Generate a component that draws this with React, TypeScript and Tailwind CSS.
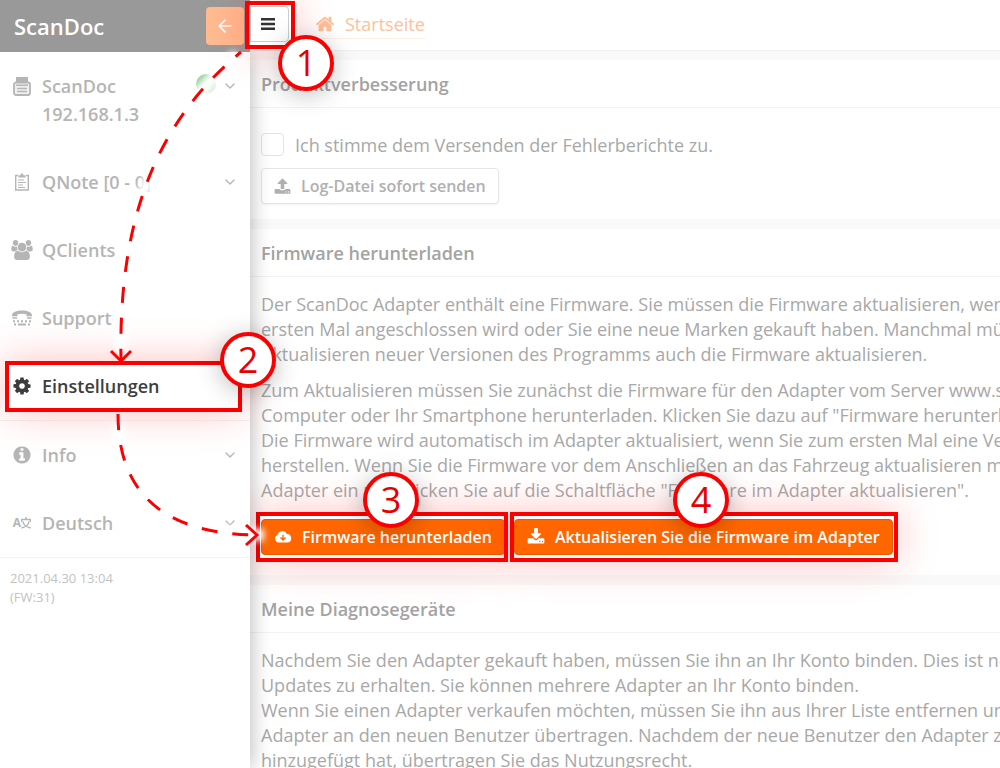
import type { ReactNode } from "react";
import { ArrowLeft, ChevronDown } from "lucide-react";
import { cx } from "class-variance-authority";

const ICONS = {
  download:
    "M1344 1344q0-26-19-45t-45-19-45 19-19 45 19 45 45 19 45-19 19-45zm256 0q0-26-19-45t-45-19-45 19-19 45 19 45 45 19 45-19 19-45zm128-224v320q0 40-28 68t-68 28h-1472q-40 0-68-28t-28-68v-320q0-40 28-68t68-28h465l135 136q58 56 136 56t136-56l136-136h464q40 0 68 28t28 68zm-325-569q17 41-14 70l-448 448q-18 19-45 19t-45-19l-448-448q-31-29-14-70 17-39 59-39h256v-448q0-26 19-45t45-19h256q26 0 45 19t19 45v448h256q42 0 59 39z",
  upload:
    "M1344 1472q0-26-19-45t-45-19-45 19-19 45 19 45 45 19 45-19 19-45zm256 0q0-26-19-45t-45-19-45 19-19 45 19 45 45 19 45-19 19-45zm128-224v320q0 40-28 68t-68 28h-1472q-40 0-68-28t-28-68v-320q0-40 28-68t68-28h427q21 56 70.5 92t110.5 36h256q61 0 110.5-36t70.5-92h427q40 0 68 28t28 68zm-325-648q-17 40-59 40h-256v448q0 26-19 45t-45 19h-256q-26 0-45-19t-19-45v-448h-256q-42 0-59-40-17-39 14-69l448-448q18-19 45-19t45 19l448 448q31 30 14 69z",
  home: "M1472 992v480q0 26-19 45t-45 19h-384v-384h-256v384h-384q-26 0-45-19t-19-45v-480q0-1 .5-3t.5-3l575-474 575 474q1 2 1 6zm223-69l-62 74q-8 9-21 11h-3q-13 0-21-7l-692-577-692 577q-12 8-24 7-13-2-21-11l-62-74q-8-10-7-23.5t11-21.5l719-599q32-26 76-26t76 26l244 204v-195q0-14 9-23t23-9h192q14 0 23 9t9 23v408l219 182q10 8 11 21.5t-7 23.5z",
  info: "M1152 1376v-160q0-14-9-23t-23-9h-96v-512q0-14-9-23t-23-9h-320q-14 0-23 9t-9 23v160q0 14 9 23t23 9h96v320h-96q-14 0-23 9t-9 23v160q0 14 9 23t23 9h448q14 0 23-9t9-23zm-128-896v-160q0-14-9-23t-23-9h-192q-14 0-23 9t-9 23v160q0 14 9 23t23 9h192q14 0 23-9t9-23zm640 416q0 209-103 385.5t-279.5 279.5-385.5 103-385.5-103-279.5-279.5-103-385.5 103-385.5 279.5-279.5 385.5-103 385.5 103 279.5 279.5 103 385.5z",
  cog: "M1152 896q0-106-75-181t-181-75-181 75-75 181 75 181 181 75 181-75 75-181zm512-109v222q0 12-8 23t-20 13l-185 28q-19 54-39 91 35 50 107 138 10 12 10 25t-9 23q-27 37-99 108t-94 71q-12 0-26-9l-138-108q-44 23-91 38-16 136-29 186-7 28-36 28h-222q-14 0-24.5-8.5t-11.5-21.5l-28-184q-49-16-90-37l-141 107q-10 9-25 9-14 0-25-11-126-114-165-168-7-10-7-23 0-12 8-23 15-21 51-66.5t54-70.5q-27-50-41-99l-183-27q-13-2-21-12.5t-8-23.5v-222q0-12 8-23t19-13l186-28q14-46 39-92-40-57-107-138-10-12-10-24 0-10 9-23 26-36 98.5-107.5t94.5-71.5q13 0 26 10l138 107q44-23 91-38 16-136 29-186 7-28 36-28h222q14 0 24.5 8.5t11.5 21.5l28 184q49 16 90 37l142-107q9-9 24-9 13 0 25 10 129 119 165 170 7 8 7 22 0 12-8 23-15 21-51 66.5t-54 70.5q26 50 41 98l183 28q13 2 21 12.5t8 23.5z",
  users:
    "M593 896q-162 5-265 128h-134q-82 0-138-40.5t-56-118.5q0-353 124-353 6 0 43.5 21t97.5 42.5 119 21.5q67 0 133-23-5 37-5 66 0 139 81 256zm1071 637q0 120-73 189.5t-194 69.5h-874q-121 0-194-69.5t-73-189.5q0-53 3.5-103.5t14-109 26.5-108.5 43-97.5 62-81 85.5-53.5 111.5-20q10 0 43 21.5t73 48 107 48 135 21.5 135-21.5 107-48 73-48 43-21.5q61 0 111.5 20t85.5 53.5 62 81 43 97.5 26.5 108.5 14 109 3.5 103.5zm-1024-1277q0 106-75 181t-181 75-181-75-75-181 75-181 181-75 181 75 75 181zm704 384q0 159-112.5 271.5t-271.5 112.5-271.5-112.5-112.5-271.5 112.5-271.5 271.5-112.5 271.5 112.5 112.5 271.5zm576 225q0 78-56 118.5t-138 40.5h-134q-103-123-265-128 81-117 81-256 0-29-5-66 66 23 133 23 59 0 119-21.5t97.5-42.5 43.5-21q124 0 124 353zm-128-609q0 106-75 181t-181 75-181-75-75-181 75-181 181-75 181 75 75 181z",
};

const Icon = ({ name, className }: { name: keyof typeof ICONS; className: string }) => (
  <svg
    viewBox={name === "users" ? "0 0 1920 1792" : "0 0 1792 1792"}
    className={cx("shrink-0 fill-current", className)}
    aria-hidden="true"
  >
    <path d={ICONS[name]} />
  </svg>
);

const DeviceIcon = () => (
  <svg viewBox="0 0 18 20" className="h-5 w-[18px]" fill="none" aria-hidden="true">
    <path d="M3 1h12v5H3z" fill="currentColor" />
    <rect x="1" y="6.500" width="16" height="12.500" rx="2" fill="#f0f0f0" stroke="currentColor" strokeWidth="1.800" />
    <path d="M3 9.200h12M4 12.400h10M4 15.600h10" stroke="currentColor" strokeWidth="1.500" />
  </svg>
);

const NoteIcon = () => (
  <svg viewBox="0 0 16 18" className="h-[18px] w-4" fill="none" stroke="currentColor" aria-hidden="true">
    <path d="M4 2.500H1.700v14.500h12.600V2.500H12" strokeWidth="1.400" />
    <path d="M4.500 4.500V2.300h2L7 .5h2l.5 1.800h2v2.200z" fill="currentColor" stroke="none" />
    <path d="M4 7h6M4 9.500h8M4 12h5M4 14.500h7" strokeWidth="1.200" />
  </svg>
);

const PhoneIcon = () => (
  <svg viewBox="0 0 20 16" className="h-4 w-5" fill="currentColor" aria-hidden="true">
    <path d="M0 5.500C0 2 4.500.500 10 .500S20 2 20 5.500v.700h-5.500V4.300C12 3.500 8 3.500 5.500 4.300v1.900H0z" />
    <path d="M.5 7.300H5v1.500H.5zM15 7.300h4.500v1.500H15z" />
    <path d="M1 10.300h2v2H1zM5 10.300h2v2H5zM9 10.300h2v2H9zM13 10.300h2v2h-2zM17 10.300h2v2h-2zM2 13.500h2v2H2zM6 13.500h8v2H6zM16 13.500h2v2h-2z" />
  </svg>
);

const LanguageIcon = () => (
  <span className="flex items-center text-xs font-bold" aria-hidden="true">
    A
    <svg viewBox="0 0 10 12" className="h-3 w-2.5" fill="none" stroke="currentColor" strokeWidth="1.500">
      <path d="M5 0v2.500M.5 5V2.500h9V5M2 4.500c.5 3 3 5.500 7.500 6.500M8 4.500C7.500 7.500 5 10 .5 11" />
    </svg>
  </span>
);

const CloudIcon = () => (
  <svg viewBox="0 0 18 14" className="h-3.5 w-[18px] shrink-0" aria-hidden="true">
    <path
      d="M4.500 12.500A4 4 0 0 1 3.300 5 5.200 5.200 0 0 1 13 4a4.300 4.300 0 0 1 .8 8.500z"
      fill="currentColor"
    />
    <path d="M9 4.800v5M6.500 7.500 9 10l2.500-2.500" fill="none" stroke="#ff6600" strokeWidth="1.400" />
  </svg>
);

const Frame = ({ className }: { className: string }) => (
  <span
    className={cx(
      "pointer-events-none absolute border-4 border-[#fa0000] shadow-[0_0_40px_rgba(255,0,0,0.25)]",
      className
    )}
  />
);

const Step = ({ value, className }: { value: number; className: string }) => (
  <span
    className={cx(
      "pointer-events-none absolute flex size-14 items-center justify-center rounded-full border-4 border-[#fa0000] bg-white text-4xl font-medium text-[#e60000] shadow-[0_4px_24px_rgba(0,0,0,0.25)]",
      className
    )}
  >
    {value}
  </span>
);

type RowProps = {
  icon: ReactNode;
  label: ReactNode;
  expandable?: boolean;
  active?: boolean;
  status?: boolean;
};

const MenuRow = ({ icon, label, expandable, active, status }: RowProps) => (
  <li className={cx("relative", active && "z-10")}>
    <a
      href="#"
      className={cx(
        "flex items-start gap-2 py-5 pr-3 pl-2.5 text-lg leading-7 font-semibold",
        active ? "text-[#3d3d3d]" : "text-[#b5b5b5]"
      )}
    >
      <span className="flex h-7 w-6 shrink-0 items-center justify-center">{icon}</span>
      <span className="flex-1">{label}</span>
      {status && (
        <span className="mt-0.5 -mr-0.5 size-5 rounded-full bg-linear-to-br from-[#96cf99] from-40% to-[#d6efd6] to-60%" />
      )}
      {expandable && <ChevronDown className="mt-1.5 size-4" />}
    </a>
    {active && (
      <>
        <Frame className="top-[9px] right-2 bottom-2 left-[5px]" />
        <Step value={2} className="-top-5 left-[220px]" />
      </>
    )}
  </li>
);

const Card = ({ title, children }: { title: string; children: ReactNode }) => (
  <section className="bg-white">
    <h2 className="flex h-12 items-center border-b border-[#f3f3f3] px-[11px] text-lg font-semibold text-[#a3a3a3]">
      {title}
    </h2>
    {children}
  </section>
);

const Arrows = () => (
  <svg
    width="270"
    height="560"
    className="pointer-events-none absolute top-0 left-0 z-30 overflow-visible"
    fill="none"
    aria-hidden="true"
  >
    <defs>
      <filter id="halo" filterUnits="userSpaceOnUse" x="-20" y="0" width="320" height="600">
        <feGaussianBlur stdDeviation="3" />
      </filter>
    </defs>
    <g stroke="#fff" strokeWidth="12" filter="url(#halo)">
      <path d="M237 55C165 115 120 205 121 350" />
      <path d="M118 424C118 490 160 534 264 535" />
    </g>
    <g stroke="#fa0000" strokeWidth="3">
      <path d="M241 52C165 115 118 205 121 360" strokeDasharray="16 15" strokeDashoffset="9" />
      <path d="M111 351l10 10 10-10" />
      <path d="M118 414C118 490 160 534 257 535" strokeDasharray="16 15" />
      <path d="M246 525l11 10-11 10" />
    </g>
  </svg>
);

const App = () => {
  return (
    <div className="relative flex h-screen overflow-hidden bg-white font-['Open_Sans',sans-serif]">
      <aside className="relative z-10 flex w-[250px] shrink-0 flex-col">
        <div className="z-10 flex h-[52px] items-center justify-between bg-[#999] pr-1.5 pl-3.5">
          <span className="text-[22px] font-semibold text-white">ScanDoc</span>
          <button
            type="button"
            aria-label="Zurück"
            className="flex size-[38px] items-center justify-center rounded bg-[#ffbb91] text-white"
          >
            <ArrowLeft className="size-5" />
          </button>
        </div>
        <div className="flex-1 bg-white shadow-[0_0_20px_rgba(0,0,0,0.3)]">
          <ul className="border-b border-[#f3f3f3]">
            <MenuRow
              icon={<DeviceIcon />}
              label={
                <>
                  ScanDoc
                  <br />
                  192.168.1.3
                </>
              }
              expandable
              status
            />
            <MenuRow icon={<NoteIcon />} label="QNote [0 - 0]" expandable />
            <MenuRow icon={<Icon name="users" className="h-5 w-[22px]" />} label="QClients" />
            <MenuRow icon={<PhoneIcon />} label="Support" />
            <MenuRow icon={<Icon name="cog" className="size-5" />} label="Einstellungen" active />
          </ul>
          <ul className="border-b border-[#f3f3f3]">
            <MenuRow icon={<Icon name="info" className="size-5" />} label="Info" expandable />
            <MenuRow icon={<LanguageIcon />} label="Deutsch" expandable />
          </ul>
          <p className="px-2.5 py-[11px] text-[13px] leading-[19px] text-[#c2c2c2]">
            2021.04.30 13:04
            <br />
            (FW:31)
          </p>
        </div>
      </aside>

      <div className="flex min-w-0 flex-1 flex-col bg-[#f9f9f9]">
        <header className="relative z-20 flex h-[51px] shrink-0 items-center border-b border-[#f0f0f0] bg-white pb-0.5">
          <button
            type="button"
            aria-label="Menü"
            className="flex h-9 w-[39px] items-center justify-center rounded-r border border-[#ccc] pr-1 text-[#333]"
          >
            <svg viewBox="0 0 16 14" className="h-3.5 w-4 fill-current" aria-hidden="true">
              <path d="M1 1h14v2.500H1zM1 5.700h14v2.500H1zM1 10.400h14v2.500H1z" />
            </svg>
          </button>
          <a href="#" className="ml-[26px] flex items-center gap-2.5 border-b border-[#fff0e6] text-lg text-[#ffbf99]">
            <Icon name="home" className="size-5" />
            Startseite
          </a>
          <Frame className="top-px -left-[5px] h-12 w-[50px]" />
          <Step value={1} className="top-[35px] left-7" />
        </header>

        <main className="flex flex-col gap-2.5 pt-[9px] whitespace-nowrap text-[#a8a8a8]">
          <Card title="Produktverbesserung">
            <div className="flex flex-col items-start gap-3 px-[11px] pt-[25px] pb-[15px]">
              <label className="flex h-[23px] items-center gap-[11px] text-lg">
                <input
                  type="checkbox"
                  className="size-[23px] appearance-none rounded border border-[#e3e3e3] bg-white checked:bg-[#ff6600]"
                />
                Ich stimme dem Versenden der Fehlerberichte zu.
              </label>
              <button
                type="button"
                className="flex h-9 items-center gap-2.5 rounded border border-[#e6e6e6] bg-white px-3 text-base font-semibold text-[#b0b0b0] shadow-sm shadow-black/5"
              >
                <Icon name="upload" className="size-[17px]" />
                Log-Datei sofort senden
              </button>
            </div>
          </Card>

          <Card title="Firmware herunterladen">
            <div className="px-[11px] pt-[15px] pb-5 text-lg leading-[25px]">
              <p>
                Der ScanDoc Adapter enthält eine Firmware. Sie müssen die Firmware aktualisieren, wenn
                <br />
                ersten Mal angeschlossen wird oder Sie eine neue Marken gekauft haben. Manchmal müssen
                <br />
                Aktualisieren neuer Versionen des Programms auch die Firmware aktualisieren.
              </p>
              <p className="mt-[11px]">
                Zum Aktualisieren müssen Sie zunächst die Firmware für den Adapter vom Server www.scandoc
                <br />
                Computer oder Ihr Smartphone herunterladen. Klicken Sie dazu auf "Firmware herunterladen".
                <br />
                Die Firmware wird automatisch im Adapter aktualisiert, wenn Sie zum ersten Mal eine Verbindung
                <br />
                herstellen. Wenn Sie die Firmware vor dem Anschließen an das Fahrzeug aktualisieren möchten,
                <br />
                Adapter ein und klicken Sie auf die Schaltfläche "Firmware im Adapter aktualisieren".
              </p>
              <div className="mt-4 flex gap-[9px]">
                <div className="relative">
                  <button
                    type="button"
                    className="flex h-9 items-center gap-2.5 rounded border border-[#e65c00] bg-[#ff6600] px-3 text-base font-semibold text-white"
                  >
                    <CloudIcon />
                    Firmware herunterladen
                  </button>
                  <Frame className="-top-[7px] -right-[3px] -bottom-[7px] -left-[5px]" />
                  <Step value={3} className="-top-[47px] left-[102px]" />
                </div>
                <div className="relative">
                  <button
                    type="button"
                    className="flex h-9 items-center gap-2.5 rounded border border-[#e65c00] bg-[#ff6600] px-3 text-base font-semibold text-white"
                  >
                    <Icon name="download" className="size-[18px]" />
                    Aktualisieren Sie die Firmware im Adapter
                  </button>
                  <Frame className="-top-[7px] -right-[5px] -bottom-[7px] -left-1" />
                  <Step value={4} className="-top-[47px] left-[159px]" />
                </div>
              </div>
            </div>
          </Card>

          <Card title="Meine Diagnosegeräte">
            <p className="px-[11px] py-[15px] text-lg leading-[25px]">
              Nachdem Sie den Adapter gekauft haben, müssen Sie ihn an Ihr Konto binden. Dies ist notwendig,
              <br />
              Updates zu erhalten. Sie können mehrere Adapter an Ihr Konto binden.
              <br />
              Wenn Sie einen Adapter verkaufen möchten, müssen Sie ihn aus Ihrer Liste entfernen und
              <br />
              Adapter an den neuen Benutzer übertragen. Nachdem der neue Benutzer den Adapter zu
              <br />
              hinzugefügt hat, übertragen Sie das Nutzungsrecht.
            </p>
          </Card>
        </main>
      </div>
      <Arrows />
    </div>
  );
};

export default App;
